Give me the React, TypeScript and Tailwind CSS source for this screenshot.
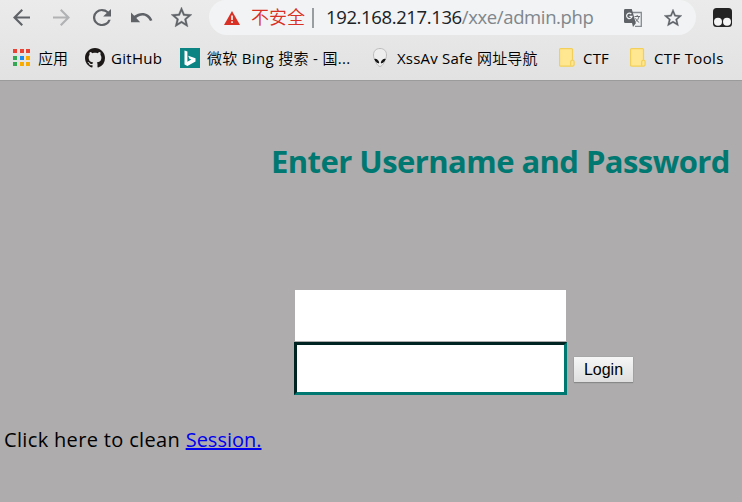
import React from 'react';

const latin = "font-['Open_Sans','Noto_Sans_CJK_SC',sans-serif]";

function Folder() {
  return (
    <svg width="16" height="19" viewBox="0 0 16 19" className="shrink-0">
      <path d="M1.400.7h11.200q.9 0 .9.9v10.600q1.600.3 1.600 1.500v3.100q0 1.200-1.300 1.400H1.400q-.8 0-.8-.9V1.600q0-.9.8-.9z" fill="#ffe691" stroke="#f2cf5b" strokeWidth="1.2" />
      <path d="M11.700 17.800v-4.200q.3-1.300 1.800-1.400" fill="none" stroke="#f2cf5b" strokeWidth="1.200" />
    </svg>
  );
}

function Star({ size }: { size: number }) {
  return (
    <svg width={size} height={size} viewBox="2 2 20 20" className="shrink-0" fill="#5f6368" stroke="#5f6368" strokeWidth="0.3">
      <path d="M22 9.24l-7.19-.62L12 2 9.19 8.63 2 9.24l5.46 4.73L5.82 21 12 17.27 18.18 21l-1.63-7.03L22 9.24zM12 15.4l-3.76 2.27 1-4.28-3.32-2.88 4.38-.38L12 6.1l1.71 4.04 4.38.38-3.32 2.88 1 4.28L12 15.4z" />
    </svg>
  );
}

function Han({ children }: { children: React.ReactNode }) {
  return <span className="font-['Noto_Sans_CJK_SC',sans-serif] font-[350]">{children}</span>;
}

function Toolbar() {
  return (
    <div className="flex h-[35px] items-center">
      <svg width="17" height="17" viewBox="4 4 16 16" className="ml-[13px] shrink-0" fill="#5f6368">
        <path d="M20 11H7.830l5.590-5.590L12 4l-8 8 8 8 1.410-1.410L7.830 13H20v-2z" />
      </svg>
      <svg width="17" height="17" viewBox="4 4 16 16" className="ml-[23px] shrink-0" fill="#b1b2b4">
        <path d="M12 4l-1.410 1.410L16.170 11H4v2h12.170l-5.580 5.590L12 20l8-8z" />
      </svg>
      <svg width="18" height="17" viewBox="4 4 16 16" preserveAspectRatio="none" className="ml-[23px] shrink-0" fill="#5f6368">
        <path d="M17.650 6.350A7.960 7.960 0 0 0 12 4a8 8 0 1 0 7.730 10h-2.080A6 6 0 1 1 12 6c1.660 0 3.140.69 4.220 1.780L13 11h7V4l-2.350 2.350z" />
      </svg>
      <svg width="22" height="12" viewBox="0 0 22 12" className="ml-[20px] mt-[-2px] shrink-0" fill="#5f6368">
        <path d="M0 1.500l3.200 3.300C9 .1 18.200.8 21.400 9.200l-2.400.9C16.500 3.900 10 2.800 5.300 7l3.900 4.200H0z" />
      </svg>
      <div className="ml-[18px] flex"><Star size={21} /></div>
      <div className="ml-[17px] flex h-[35px] w-[487px] shrink-0 items-center rounded-b-[18px] rounded-t-[17px] bg-[#f1f3f4]">
        <svg width="16" height="14" viewBox="0 0 16 14" className="ml-[15px] shrink-0">
          <path d="M8 0l8 14H0z" fill="#d93025" />
          <path d="M7.200 4.600h1.600v4.300H7.200zM7.200 10.200h1.600v1.700H7.200z" fill="#fff" />
        </svg>
        <span className="ml-[11px] mt-[-3px] w-[54px] shrink-0 whitespace-nowrap font-['Noto_Sans_CJK_SC',sans-serif] text-[18px] font-[350] leading-[34px] text-[#d93025]">不安全</span>
        <div className="ml-[7px] h-[20px] w-[2px] shrink-0 bg-[#9a9da0]" />
        <span className="ml-[12px] mt-[-2px] w-[269px] shrink-0 whitespace-nowrap text-[18.5px] leading-[34px] tracking-[-0.38px] text-[#202124]">
          192.168.217.136<span className="text-[#80868b]">/xxe/admin.php</span>
        </span>
        <svg width="19" height="19" viewBox="0 0 19 19" className="ml-[29px] mt-px shrink-0">
          <path d="M8 3.500h9.300v13.800H11" fill="none" stroke="#868a8e" strokeWidth="1.300" />
          <path d="M1.200 0h6.600l4 14H1.200Q0 14 0 12.800V1.200Q0 0 1.200 0z" fill="#5f6368" />
          <path d="M8 14h4l-3 4z" fill="#5f6368" />
          <path d="M7.300 5A2.700 2.700 0 1 0 8 7.300H5.400" fill="none" stroke="#f1f3f4" strokeWidth="1.200" />
          <path d="M10.500 7.500H16M13.200 6v1.500M15 7.700q-.8 3.300-3.300 5M11.500 9.300q1 2.700 3.700 4.200" fill="none" stroke="#6d7175" strokeWidth="1" />
        </svg>
        <div className="ml-[21px] flex"><Star size={18} /></div>
      </div>
      <svg width="19" height="19" viewBox="0 0 19 19" className="ml-[17px] shrink-0">
        <rect width="19" height="19" rx="3.500" fill="#242424" />
        <circle cx="5" cy="13.800" r="4" fill="#f5f5f5" />
        <circle cx="14" cy="13.800" r="4" fill="#f5f5f5" />
      </svg>
    </div>
  );
}

function Bookmarks() {
  const dots = ['#ea4335', '#ea4335', '#ea4335', '#34a853', '#1a8cf0', '#f9ab00', '#34a853', '#f9ab00', '#f9ab00'];
  return (
    <div className="flex h-[45px] items-center whitespace-nowrap text-[15px] leading-[20px] text-black">
      <div className="ml-[13px] grid w-[18px] shrink-0 grid-cols-[4px_4px_4px] gap-[2.500px]">
        {dots.map((c, i) => (
          <div key={i} className="h-[4px]" style={{ backgroundColor: c }} />
        ))}
      </div>
      <span className="ml-[7px] w-[31px] shrink-0"><Han>应用</Han></span>
      <svg width="20" height="20" viewBox="0 0 16 16" className="ml-[16px] shrink-0" fill="#1b1817">
        <path d="M8 0C3.58 0 0 3.58 0 8c0 3.54 2.29 6.53 5.47 7.59.4.07.55-.17.55-.38 0-.19-.01-.82-.01-1.49-2.01.37-2.53-.49-2.69-.94-.09-.23-.48-.94-.82-1.13-.28-.15-.68-.52-.01-.53.63-.01 1.08.58 1.23.82.72 1.21 1.87.87 2.33.66.07-.52.28-.87.51-1.07-1.78-.2-3.64-.89-3.64-3.95 0-.87.31-1.59.82-2.15-.08-.2-.36-1.02.08-2.12 0 0 .67-.21 2.2.82.64-.18 1.32-.27 2-.27s1.36.09 2 .27c1.53-1.04 2.2-.82 2.2-.82.44 1.1.16 1.92.08 2.12.51.56.82 1.27.82 2.15 0 3.07-1.87 3.75-3.65 3.95.29.25.54.73.54 1.48 0 1.07-.01 1.93-.01 2.2 0 .21.15.46.55.38A8.01 8.01 0 0 0 16 8c0-4.42-3.58-8-8-8z" />
      </svg>
      <span className="ml-[6px] w-[52px] shrink-0 tracking-[0.3px]">GitHub</span>
      <svg width="20" height="20" viewBox="0 0 20 20" className="ml-[17px] shrink-0">
        <rect width="20" height="20" fill="#0d8484" />
        <path d="M4.500 2.500l2.900 1v10.300l3.900-2.200-1.900-.9-1.200-3 7.300 2.600v3.200l-8.100 4.500-2.900-1.600z" fill="#fff" />
      </svg>
      <span className="ml-[7px] w-[144px] shrink-0 tracking-[0.32px]"><Han>微软</Han> Bing <Han>搜索</Han> - <Han>国</Han>...</span>
      <svg width="14" height="19" viewBox="0 0 14 19" className="ml-[22px] shrink-0">
        <path d="M7 .5C3 .5.5 3 .5 7c0 4.500 4 11.500 6.500 11.500S13.500 11.500 13.500 7C13.500 3 11 .5 7 .5z" fill="#eee" stroke="#bcbcbc" />
        <path d="M1.800 11q3.600.3 4 4-3.500-.8-4-4zM12.200 11q-3.600.3-4 4 3.500-.8 4-4z" fill="#151515" stroke="#151515" />
      </svg>
      <span className="ml-[10px] w-[143px] shrink-0 tracking-[0.2px]">XssAv Safe <Han>网址导航</Han></span>
      <div className="ml-[19px] flex"><Folder /></div>
      <span className="ml-[8px] w-[28px] shrink-0 tracking-[0.2px]">CTF</span>
      <div className="ml-[19px] flex"><Folder /></div>
      <span className="ml-[8px] w-[80px] shrink-0 tracking-[0.35px]">CTF Tools</span>
    </div>
  );
}

export default function App() {
  return (
    <div className={`flex h-[502px] w-[742px] flex-col overflow-hidden bg-[#aeacac] ${latin}`}>
      <header className="h-[81px] shrink-0 border-b border-[#9b9b9b] bg-linear-to-b from-[#ebebeb] to-[#e2e2e2]">
        <Toolbar />
        <Bookmarks />
      </header>
      <main className="flex flex-col">
        <h2 className="ml-[271px] mt-[60px] whitespace-nowrap text-[31px] font-bold leading-[40px] tracking-[-0.56px] text-[#007872]">
          Enter Username and Password
        </h2>
        <form className="ml-[294px] mt-[109px] flex flex-col" onSubmit={(e) => e.preventDefault()}>
          <input className="ml-px h-[51px] w-[271px] bg-white outline-none" />
          <div className="mt-px flex">
            <input type="password" className="h-[53px] w-[273px] border-[3px] border-b-[#007872] border-l-[#002422] border-r-[#007872] border-t-[#002422] bg-white outline-none" />
            <button className="ml-[7px] mt-[15px] h-[25px] w-[59px] bg-linear-to-b from-[#f6f6f6] to-[#dedede] font-['Liberation_Sans',sans-serif] text-[16px] leading-[25px] text-black shadow-[0_0_1px_#888,0_1px_1px_#888]">
              Login
            </button>
          </div>
        </form>
        <p className="ml-[4px] mt-[30px] whitespace-nowrap text-[20px] leading-[30px] text-black">
          <span className="tracking-[0.34px]">Click here to clean </span>
          <a href="#" className="text-[#0000ee] underline">Session.</a>
        </p>
      </main>
    </div>
  );
}
